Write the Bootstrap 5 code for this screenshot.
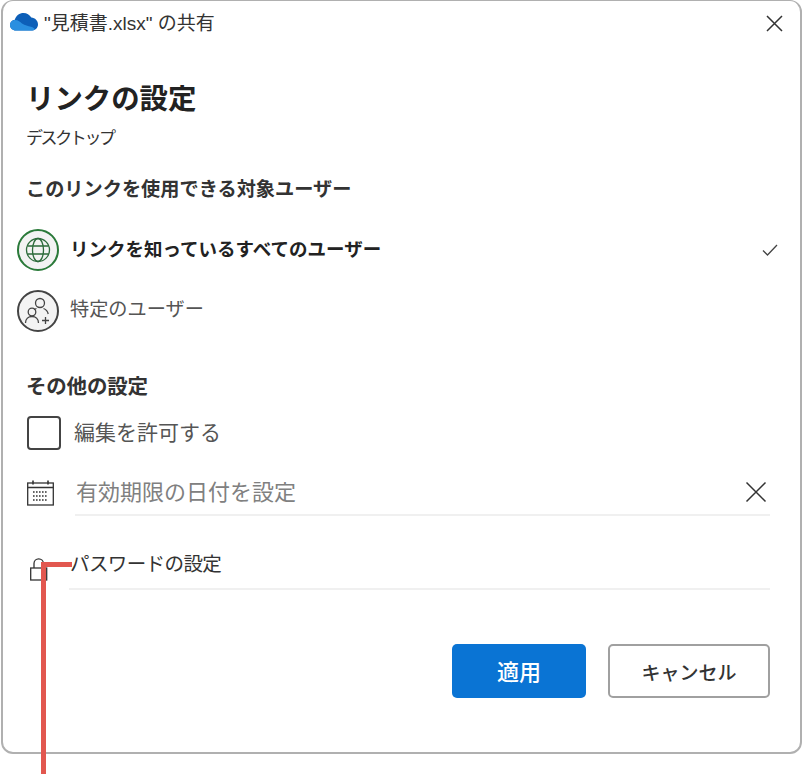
<!DOCTYPE html>
<html lang="ja">
<head>
<meta charset="utf-8">
<title>リンクの設定</title>
<link href="https://cdn.jsdelivr.net/npm/bootstrap@5.3.0/dist/css/bootstrap.min.css" rel="stylesheet">
<style>
html,body{margin:0;background:#fff;height:774px;overflow:hidden}
body{font-family:"Liberation Sans","Noto Sans CJK JP",sans-serif;color:#262626;position:relative}
.win{width:801px;height:754px;margin-left:1px;border-style:solid;border-color:#b0b0b0;border-radius:12px;position:relative;background:#fff;border-width:1px 2px 2px 2px}
.tbar{height:45px;padding:0 17px 0 7px}
.cloud{margin-bottom:5px}
.tbar-t{font-size:19px;margin-left:6px;line-height:45px;color:#333}
.ttl{font-size:28.400px;font-weight:700;line-height:40px;margin:33px 0 0 23px;color:#222}
.sub{font-size:17px;line-height:24px;margin:8px 0 0 23px;letter-spacing:-2.400px;color:#333}
.sec{font-weight:700;line-height:26px;color:#333;margin-left:23px}
.s1{font-size:19.200px;margin-top:26px}
.s2{font-size:20.500px;margin-top:33px;letter-spacing:-.2px}
.opt{height:61px;padding:0 22px 0 14px}
.opt1{margin-top:16px}
.circ{width:42px;height:42px;border-radius:50%;background:#f3f3f3;border:2px solid #444;flex:none}
.circ.on{border-color:#2b7a3a}
.otxt{margin-left:11px;color:#555;font-size:19.200px}
.otxt.on{font-size:18.500px;font-weight:700;color:#222}
.cbrow{margin:15px 0 0 24px;height:36px}
.cb{width:34px;height:34px;border:2px solid #444;border-radius:4px;flex:none}
.cbt{font-size:21px;margin-left:13px;color:#555}
.frow{margin:19px 30px 0 24px}
.fic{width:30px;flex:none}
.ffield{border-bottom:2px solid #f0f0f0;height:46px;margin-left:18px;padding-right:3px}
.ftxt{font-size:22px;color:#808080;padding-left:1px}
.prow{margin:22px 30px 0 24px;height:52px}
.lock{margin:12px 0 0 2px}
.pf{border-bottom:2px solid #f0f0f0;margin-left:12px;height:52px}
.ptxt{font-size:19.500px;color:#333;letter-spacing:-.6px;padding:3px 0 0 1px}
.acts{margin:54px 30px 0 0;gap:22px}
.bt{height:54px;border-radius:5px;font-weight:500}
.bt-a{width:134px;background:#0a74d4;color:#fff;border:0;font-size:22px;padding:3px 0 0}
.bt-c{width:162px;background:#fff;color:#333;border:2px solid #a0a0a0;font-size:19px;padding:6px 0 0}
.red-v{position:absolute;left:41px;top:562px;width:5px;height:212px;background:#e2574f}
.red-h{position:absolute;left:41px;top:562px;width:31px;height:5px;background:#e2574f}
</style>
</head>
<body>
<div class="win">
  <div class="tbar d-flex align-items-center">
    <svg class="cloud" width="28" height="19" viewBox="0 0 28 19"><path d="M6 18.500C2.500 18.500 0 16 0 13c0-2.800 2-5 4.800-5.300C6 3.500 9.500 1 13.500 1c3.300 0 6.200 1.700 7.800 4.600 3.800.2 6.700 3.300 6.700 6.900 0 3.400-2.800 6-6 6z" fill="#0d5fb8"/><path d="M6 18.500C2.500 18.500 0 16 0 13c0-2.500 2-5 5-5 3.500 0 5 2 7 3.500 3 2.200 6 2.200 9 3.300 2 .8 3.800 1.500 3.800 2.700-1 .7-2.200 1-3.300 1z" fill="#2a8fe0"/></svg>
    <span class="tbar-t">"見積書.xlsx" の共有</span>
    <svg class="ms-auto" width="17" height="17" viewBox="0 0 17 17"><path d="M1 1l15 15M16 1L1 16" stroke="#333" stroke-width="1.500" fill="none"/></svg>
  </div>
  <div class="ttl">リンクの設定</div>
  <div class="sub">デスクトップ</div>
  <div class="sec s1">このリンクを使用できる対象ユーザー</div>
  <div class="opt opt1 d-flex align-items-center">
    <div class="circ on d-flex align-items-center justify-content-center">
      <svg width="26" height="26" viewBox="0 0 26 26" fill="none" stroke="#2c6b3a" stroke-width="1.300"><circle cx="13" cy="13" r="11.500"/><ellipse cx="13" cy="13" rx="5.500" ry="11.500"/><path d="M2.500 9h21M2.500 17h21"/></svg>
    </div>
    <span class="otxt on">リンクを知っているすべてのユーザー</span>
    <svg class="ms-auto" width="16" height="12" viewBox="0 0 16 12"><path d="M1 6.500l4.500 4.500L15 1" stroke="#444" stroke-width="1.300" fill="none"/></svg>
  </div>
  <div class="opt d-flex align-items-center">
    <div class="circ d-flex align-items-center justify-content-center">
      <svg width="30" height="30" viewBox="0 0 30 30" fill="none" stroke="#444" stroke-width="1.300"><circle cx="17" cy="7" r="4.500"/><path d="M13.500 12.500c-1 .3-1.800.8-2.500 1.300M20.500 12.500c2.500 1 4.200 3 4.700 5.500"/><circle cx="9" cy="16" r="3.800"/><path d="M2.500 27c0-4 2.800-6.500 6.500-6.500s6.500 2.500 6.500 6.500M22.500 21v7M19 24.500h7"/></svg>
    </div>
    <span class="otxt">特定のユーザー</span>
  </div>
  <div class="sec s2">その他の設定</div>
  <div class="cbrow d-flex align-items-center">
    <div class="cb"></div>
    <span class="cbt">編集を許可する</span>
  </div>
  <div class="frow d-flex align-items-center">
    <div class="fic">
      <svg class="d-block" width="27" height="26" viewBox="0 0 27 26" fill="none" stroke="#333" stroke-width="1.300"><rect x=".7" y="3" width="25.600" height="22"/><path d="M.7 7.500h25.600M6 .5v4M21 .5v4" stroke-width="1.600"/><path d="M6 12h15M6 16h15M6 20h15" stroke-dasharray="1.600 1.400" stroke-width="1.600"/></svg>
    </div>
    <div class="ffield flex-grow-1 d-flex align-items-center">
      <span class="ftxt">有効期限の日付を設定</span>
      <svg class="ms-auto" width="22" height="22" viewBox="0 0 22 22"><path d="M1.500 1.500l19 19M20.500 1.500l-19 19" stroke="#333" stroke-width="1.500" fill="none"/></svg>
    </div>
  </div>
  <div class="prow d-flex align-items-center">
    <div class="fic">
      <svg class="d-block lock" width="20" height="26" viewBox="0 0 20 26" fill="none" stroke="#333" stroke-width="1.300"><rect x="1.700" y="11" width="16" height="12"/><path d="M5 11V6.500a4.700 4.700 0 0 1 9.400 0V11"/></svg>
    </div>
    <div class="pf flex-grow-1 d-flex align-items-center">
      <span class="ptxt">パスワードの設定</span>
    </div>
  </div>
  <div class="acts d-flex justify-content-end">
    <button type="button" class="btn bt bt-a">適用</button>
    <button type="button" class="btn bt bt-c">キャンセル</button>
  </div>
</div>
<div class="red-h"></div>
<div class="red-v"></div>
</body>
</html>
